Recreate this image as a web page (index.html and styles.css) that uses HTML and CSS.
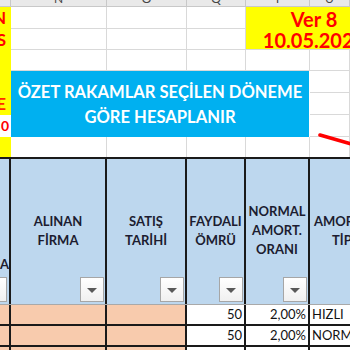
FILE: index.html
```html
<!DOCTYPE html>
<html>
<head>
<meta charset="utf-8">
<link rel="stylesheet" href="styles.css">
</head>
<body>
<div class="sheet">
  <div class="colhdr">
    <div class="ch"></div>
    <div class="ch"><span>N</span></div>
    <div class="ch"><span>O</span></div>
    <div class="ch"><span>Q</span></div>
    <div class="ch"><span>T</span></div>
    <div class="ch"><span>U</span></div>
  </div>

  <div class="top">
    <div class="leftcol">
      <div class="lc"><span class="red">N</span></div>
      <div class="lc"><span class="red">S</span></div>
      <div class="lc"></div>
      <div class="lc"></div>
      <div class="lc lc-e"><span class="red">E</span></div>
      <div class="lc white"><span class="red small">0</span></div>
      <div class="lc"></div>
    </div>

    <div class="c r1 c2"></div><div class="c r1 c3"></div><div class="c r1 c4"></div>
    <div class="c r2 c2"></div><div class="c r2 c3"></div><div class="c r2 c4"></div>
    <div class="c r3 c2"></div><div class="c r3 c3"></div><div class="c r3 c4"></div>
    <div class="c r3 c5"></div><div class="c r3 c6"></div>
    <div class="c r4 c6"></div><div class="c r5 c6"></div><div class="c r6 c6"></div>
    <div class="c r7 c2"></div><div class="c r7 c3"></div><div class="c r7 c4"></div>
    <div class="c r7 c5"></div><div class="c r7 c6"></div>

    <div class="ver">
      <div class="ver-in">
        <div>Ver 8</div>
        <div>10.05.2022</div>
      </div>
    </div>

    <div class="note">
      <div>ÖZET RAKAMLAR SEÇİLEN DÖNEME</div>
      <div>GÖRE HESAPLANIR</div>
    </div>

    <svg class="arrow" width="40" height="20" viewBox="0 0 40 20">
      <line x1="2" y1="2" x2="40" y2="13" stroke="#ff0000" stroke-width="3.6" stroke-linecap="round"/>
    </svg>
  </div>

  <div class="hdr">
    <div class="hc h0"><span>A</span><div class="dd dd0"><i></i></div></div>
    <div class="hc"><span>ALINAN<br>FİRMA</span><div class="dd"><i></i></div></div>
    <div class="hc"><span>SATIŞ<br>TARİHİ</span><div class="dd"><i></i></div></div>
    <div class="hc"><span>FAYDALI<br>ÖMRÜ</span><div class="dd"><i></i></div></div>
    <div class="hc"><span>NORMAL<br>AMORT.<br>ORANI</span><div class="dd"><i></i></div></div>
    <div class="hc hlast"><div class="hl"><span class="l1">AMORTİSMAN</span><span class="l2">TİPİ</span></div></div>
  </div>

  <div class="row">
    <div class="d peach"></div>
    <div class="d peach"></div>
    <div class="d peach"></div>
    <div class="d num">50</div>
    <div class="d num">2,00%</div>
    <div class="d txt">HIZLI</div>
  </div>
  <div class="row">
    <div class="d peach"></div>
    <div class="d peach"></div>
    <div class="d peach"></div>
    <div class="d num">50</div>
    <div class="d num">2,00%</div>
    <div class="d txt">NORMAL</div>
  </div>
  <div class="row rowpart">
    <div class="d peach"></div>
    <div class="d peach"></div>
    <div class="d peach"></div>
    <div class="d"></div>
    <div class="d"></div>
    <div class="d"></div>
  </div>
</div>
</body>
</html>
```

FILE: styles.css
```css
* { box-sizing: border-box; margin: 0; padding: 0; }
html, body { width: 350px; height: 350px; overflow: hidden; background: #fff; }
body { font-family: Lato, "Open Sans", sans-serif; }

.sheet {
  width: 350px;
  height: 350px;
  overflow: hidden;
  position: relative;
  --cols: 11px 96px 80px 59px 64px 40px;
}

/* column letter strip */
.colhdr {
  display: grid;
  grid-template-columns: var(--cols);
  height: 7px;
  background: #e9e9e9;
  border-bottom: 1px solid #c8c8c8;
  overflow: hidden;
}
.ch {
  border-right: 1px solid #c8c8c8;
  display: flex;
  justify-content: center;
  align-items: flex-end;
  overflow: hidden;
}
.ch span {
  font-size: 12px;
  line-height: 12px;
  color: #444;
  margin-bottom: 1px;
}

/* upper area */
.top {
  display: grid;
  grid-template-columns: var(--cols);
  grid-template-rows: 22px 21px 21px 22px 22px 22px 20px;
  position: relative;
}
.c { border-right: 1px solid #d9d9d9; border-bottom: 1px solid #d9d9d9; }
.r1 { grid-row: 1; } .r2 { grid-row: 2; } .r3 { grid-row: 3; } .r4 { grid-row: 4; }
.r5 { grid-row: 5; } .r6 { grid-row: 6; } .r7 { grid-row: 7; }
.c2 { grid-column: 2; } .c3 { grid-column: 3; } .c4 { grid-column: 4; }
.c5 { grid-column: 5; } .c6 { grid-column: 6; }
.r7 { border-bottom: none; }

.leftcol {
  grid-column: 1;
  grid-row: 1 / 8;
  display: grid;
  grid-template-rows: 22px 21px 21px 22px 22px 22px 20px;
  background: #ffff00;
  overflow: hidden;
}
.lc {
  display: flex;
  justify-content: flex-end;
  align-items: center;
  overflow: hidden;
  padding-right: 5px;
}
.lc.white { background: #fff; padding-right: 2px; }
.lc-e { align-items: flex-start; }
.red {
  color: #ff0000;
  font-weight: 700;
  font-size: 17px;
  line-height: 18px;
}
.lc-e .red { margin-top: 2px; color: #ff2a00; }
.red.small { font-size: 14px; }

.ver {
  grid-column: 5 / 7;
  grid-row: 1 / 3;
  background: #ffff00;
  border-bottom: 1px solid #d9d9d9;
  overflow: hidden;
  position: relative;
}
.ver-in {
  width: 136px;
  padding-top: 2px;
  color: #ff0000;
  font-weight: 700;
  font-size: 20px;
  line-height: 21px;
  text-align: center;
}

.note {
  grid-column: 2 / 6;
  grid-row: 4 / 7;
  background: #00b0f0;
  color: #fff;
  font-weight: 700;
  font-size: 16.6px;
  line-height: 25px;
  text-align: center;
  display: flex;
  flex-direction: column;
  justify-content: center;
  padding-top: 1px;
  margin-right: 1px;
}

.arrow {
  position: absolute;
  left: 318px;
  top: 126px;
}

/* header row */
.hdr {
  display: grid;
  grid-template-columns: var(--cols);
  height: 148px;
  background: #bdd7ee;
  border-top: 2px solid #1a1a1a;
  border-bottom: 1px solid #a9a9a9;
}
.hc {
  position: relative;
  border-right: 2px solid #1a1a1a;
  display: flex;
  align-items: center;
  justify-content: center;
  text-align: center;
  font-weight: 700;
  font-size: 13px;
  line-height: 19px;
  color: #1c1c30;
  overflow: hidden;
  padding-bottom: 2px;
}
.hc.h0 {
  justify-content: flex-start;
  align-items: flex-end;
  padding-bottom: 30px;
}
.hc.hlast {
  border-right: none;
  justify-content: flex-start;
}
.hl { display: flex; flex-direction: column; align-items: flex-start; white-space: nowrap; }
.hl .l1 { margin-left: 4px; }
.hl .l2 { margin-left: 22px; }

.dd {
  position: absolute;
  right: 1px;
  bottom: 2px;
  width: 24px;
  height: 25px;
  background: linear-gradient(#ffffff, #f0f0f0);
  border: 1px solid #a6a6a6;
  display: flex;
  align-items: center;
  justify-content: center;
}
.dd i {
  width: 0;
  height: 0;
  border-left: 5px solid transparent;
  border-right: 5px solid transparent;
  border-top: 5px solid #595959;
  margin-top: 2px;
}
.dd.dd0 { right: 2px; }

/* data rows */
.row {
  display: grid;
  grid-template-columns: var(--cols);
  height: 21px;
  border-bottom: 2px solid #1a1a1a;
}
.row.rowpart { height: 10px; border-bottom: none; }
.d {
  border-right: 2px solid #1a1a1a;
  font-size: 13px;
  line-height: 19px;
  color: #111;
  overflow: hidden;
  white-space: nowrap;
}
.d:last-child { border-right: none; }
.peach { background: #f8cbad; }
.num { text-align: right; padding-right: 2px; }
.txt { padding-left: 2px; }
```
